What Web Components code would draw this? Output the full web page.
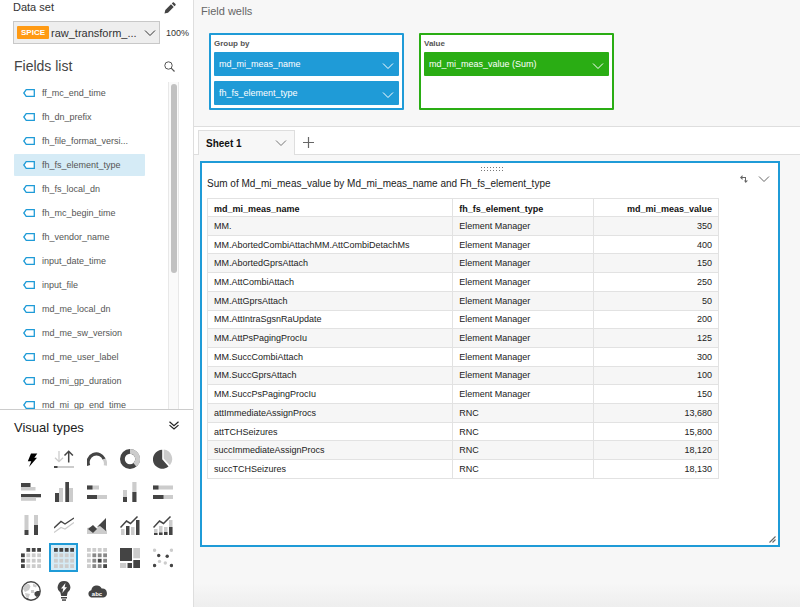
<!DOCTYPE html>
<html lang="en">
<head>
<meta charset="utf-8">
<title>Analysis</title>
<style>
    body {
        margin: 0;
        font-family: "Liberation Sans", Arial, Helvetica, sans-serif;
        font-size: 9px;
        color: #444;
        --blue: #1f9bd7;
        --green: #2aad14;
        --line: #dedede;
        --canvas: #f7f7f7;
    }
</style>
</head>
<body>
<analysis-app></analysis-app>

<script>
// small line icons, used all over the page
const GLYPHS = {
    chevron: ['0 0 12 8', '<path d="M1 1.500l5 5 5-5" fill="none" stroke="currentColor" stroke-width="1"/>'],
    double: ['0 0 10 9', '<path d="M.5 .8l4.500 3.800L9.500 .8M.5 4.100L5 7.900l4.500-3.800" fill="none" stroke="currentColor" stroke-width="1.200"/>'],
    pencil: ['0 0 12 12', '<path d="M.5 11.500l.8-3.500L7 2.300l2.700 2.700L4 10.700zM7.800 1.500l1-1c.3-.3.8-.3 1.100 0l1.600 1.600c.3.3.3.8 0 1.100l-1 1z" fill="currentColor"/>'],
    search: ['0 0 11 11', '<circle cx="4.500" cy="4.500" r="3.700" fill="none" stroke="currentColor"/><path d="M7.200 7.200l3.300 3.300" stroke="currentColor" stroke-width="1.200"/>'],
    tag: ['0 0 12 8', '<path d="M3.200 .7h8.100v6.600H3.200L.8 4z" fill="#fff" stroke="currentColor" stroke-width="1.300"/>'],
    plus: ['0 0 11 11', '<path d="M5.500 0v11M0 5.500h11" stroke="currentColor" stroke-width="1.200"/>'],
    swap: ['0 0 8 8', '<path d="M0 2.500L2.500 0v2H6v3.500h2L5.700 8 4 5.500h1V3H2.500v2z" fill="currentColor"/>'],
    grip: ['0 0 7 7', '<path d="M.5 6.500l6-6M3.500 6.500l3-3" stroke="currentColor" stroke-width="1.100"/>']
};

const D = '#444';
const L = '#ccc';
const rect = (x, y, w, h, fill) => `<rect x="${x}" y="${y}" width="${w}" height="${h}" fill="${fill}"/>`;
const dot = (x, y, fill) => `<circle cx="${x}" cy="${y}" r="1.700" fill="${fill}"/>`;

// 4x4 matrix of squares, one colour letter for each cell
function matrix(rows) {
    const colours = {d: '#444', m: '#888', l: '#ccc', n: 'none'};
    return rows.map((row, y) => [...row].map((c, x) =>
        rect(x * 5.4, y * 5.4, 3.8, 3.8, colours[c])).join('')).join('');
}

// name and drawing of each visual type, on a 20x20 box
const VISUALS = [
    ['AutoGraph', '<path d="M10 4.500h6.300l-3 4.200h2.700L8 18l2.300-5.700H6.800z" fill="#000"/>'],
    ['KPI', `<path d="M5 2v10.500M1 8.700l4 4 4-4" fill="none" stroke="${L}" stroke-width="1.300"/>
        <path d="M14.700 13.500V2.500M10.500 6.500l4.200-4.200 4.200 4.200" fill="none" stroke="${D}" stroke-width="1.500"/>
        ${rect(0, 17, 20, 2, L)}${rect(0, 17, 3.5, 2, D)}`],
    ['Gauge', `<path d="M1.700 16.500a8.300 8.300 0 0 1 15.500-6.300" fill="none" stroke="${D}" stroke-width="3.200"/>
        <path d="M17.200 10.200a8.300 8.300 0 0 1 1.100 6.300" fill="none" stroke="${L}" stroke-width="3.200"/>`],
    ['Donut chart', `<circle cx="10" cy="10" r="7.600" fill="none" stroke="${D}" stroke-width="4.800"/>
        <path d="M10 2.400a7.600 7.600 0 0 1 4.900 13.400" fill="none" stroke="${L}" stroke-width="4.800"/>`],
    ['Pie chart', `<path d="M9.200 .8v9.500l6.300 7.300A9.500 9.500 0 1 1 9.200 .8z" fill="${D}"/>
        <path d="M10.700 .6a9.500 9.500 0 0 1 6.200 15.600l-6.200-6.800z" fill="${L}"/>`],
    ['Horizontal bar chart', rect(0, 1, 9.5, 4, D) + rect(0, 5, 14.5, 3.5, L) + rect(0, 12, 20, 3.3, D) + rect(0, 15.3, 15, 3.5, L)],
    ['Vertical bar chart', rect(1, 11, 4, 9, D) + rect(5, 6, 4, 14, L) + rect(11.3, 0, 3.7, 20, D) + rect(15, 6, 4, 14, L)],
    ['Stacked horizontal bar chart', rect(0, 3.5, 12, 4, L) + rect(0, 3.5, 5.5, 4, D) + rect(0, 13, 20, 4, L) + rect(0, 13, 10, 4, D)],
    ['Stacked vertical bar chart', rect(3, 8, 4, 7, L) + rect(3, 15, 4, 5, D) + rect(12.3, 0, 4.2, 10, L) + rect(12.3, 10, 4.2, 10, D)],
    ['Full horizontal bar chart', rect(0, 3.5, 20, 4, L) + rect(0, 3.5, 5.5, 4, D) + rect(0, 13, 20, 4, L) + rect(0, 13, 10.5, 4, D)],
    ['Full vertical bar chart', rect(3.5, 0, 4, 15, L) + rect(3.5, 15, 4, 5, D) + rect(13, 0, 4, 10, L) + rect(13, 10, 4, 10, D)],
    ['Line chart', `<path d="M0 17.500l7-5 4 1.500 9-6.500" fill="none" stroke="${L}" stroke-width="1.300"/>
        <path d="M0 13l7-6.500 4 2.500 9-6" fill="none" stroke="${D}" stroke-width="1.400"/>`],
    ['Area chart', `<path d="M0 19v-6l4-1 6 1 3-4 7 6v4z" fill="${L}"/><path d="M1 14l5-4 4 4-4 4zM10 12l9-9v13l-6-5z" fill="${D}"/>`],
    ['Bar and line chart', rect(1, 14, 3.5, 6, L) + rect(6, 11, 3.5, 9, D) + rect(11, 12, 3.5, 8, L) + rect(16, 5, 3.5, 15, D) +
        `<path d="M.5 12.500l6-6.500 4 2.500 7-7" fill="none" stroke="${D}" stroke-width="1.500"/>`],
    ['Stacked bar and line chart', rect(1, 14, 3.5, 6, L) + rect(6, 11, 3.5, 9, L) + rect(11, 12, 3.5, 8, L) + rect(16, 5, 3.5, 15, L) +
        rect(1, 18, 3.5, 2, D) + rect(6, 17.5, 3.5, 2.5, D) + rect(11, 17, 3.5, 3, D) + rect(16, 12, 3.5, 8, D) +
        `<path d="M.5 12.500l6-6.500 4 2.500 7-7" fill="none" stroke="${D}" stroke-width="1.500"/>`],
    ['Pivot table', matrix(['nddd', 'dlll', 'dlll', 'dlll'])],
    ['Table', matrix(['dddd', 'llll', 'llll', 'llll'])],
    ['Heat map', matrix(['llll', 'lmmm', 'lmdm', 'lmmd'])],
    ['Tree map', rect(0, 0, 12, 13, D) + rect(13.3, 0, 6.7, 10.3, L) + rect(0, 15, 6.3, 5, L) + rect(7.5, 15, 4.5, 5, D) + rect(13.3, 12, 6.7, 8, D)],
    ['Scatter plot', dot(1.6, 2.3, L) + dot(18.4, 2.3, L) + dot(6.5, 13.4, L) + dot(12.3, 15, L) +
        dot(5.7, 7.5, D) + dot(14.2, 8.3, D) + dot(1.6, 17.5, D) + dot(18.4, 17.5, D)],
    ['Map', `<circle cx="10" cy="10" r="9.200" fill="#fff" stroke="${D}" stroke-width="1.400"/>
        <path d="M2 8c0-3 3-5.500 6-5l1.500 2.500L8 9l-4 2zM4 12l5 1-1.500 4-2.500-1zM12 2.500l4 2-1 2-3-1zM10 9h3v3h-3z" fill="${L}"/>
        <path d="M13.500 11.500l2.500-1.500h3l-1 4.500-2.500 1.500-2-2zM5.500 16.500l4 2.200-3-.2z" fill="${D}"/>`],
    ['Insight', `<path d="M10 0a6.300 6.300 0 0 1 3.600 11.500L12.800 15H7.200l-.8-3.500A6.300 6.300 0 0 1 10 0z" fill="${D}"/>
        ${rect(7, 16, 6, 1.5, D)}${rect(8, 18.3, 4, 1.5, D)}
        <path d="M11.500 2L7 7.500h2.300L8.300 12 13 6.200h-2.400z" fill="#fff"/>`],
    ['Word cloud', `<path d="M4 16.500a3.800 3.800 0 0 1 .3-7.300A5.500 5.500 0 0 1 14.700 7.500a4.600 4.600 0 0 1 1.800 9z" fill="${D}"/>
        <text x="10" y="14.500" text-anchor="middle" font-size="6" font-weight="bold" fill="#fff">abc</text>`]
];

class GlyphIcon extends HTMLElement {
    constructor() {
        super();
        this.attachShadow({mode: 'open'});
    }

    connectedCallback() {
        const [box, drawing] = GLYPHS[this.getAttribute('name')];
        const [, , w, h] = box.split(' ');
        this.shadowRoot.innerHTML = `
            <style>
                :host { display: inline-flex; flex: none; }
                svg { display: block; }
            </style>
            <svg viewBox="${box}" width="${w}" height="${h}" aria-hidden="true">${drawing}</svg>
        `;
    }
}

// <data-set-picker tag="SPICE" value="my_data" loaded="100%">
class DataSetPicker extends HTMLElement {
    constructor() {
        super();
        this.attachShadow({mode: 'open'});
    }

    connectedCallback() {
        this.shadowRoot.innerHTML = `
            <style>
                :host { display: block; padding: 0 4px 0 13px; color: #333; }
                .top { display: flex; justify-content: space-between; align-items: center; height: 15px; padding-right: 13px; margin-bottom: 6px; }
                label { font-size: 11px; line-height: 15px; }
                button { border: 0; background: none; padding: 0; display: flex; color: #444; }
                .row { display: flex; align-items: center; gap: 6px; }
                .box { flex: 1; min-width: 0; box-sizing: border-box; height: 23px; display: grid; grid-template-columns: auto 1fr 12px; align-items: center; padding: 0 3px; background: #eee; border: 1px solid #c8c8c8; }
                .badge { background: #ff9a13; color: #fff; font-weight: bold; font-size: 8px; line-height: 13px; padding: 0 4px; border-radius: 1px; }
                select { grid-column: 2 / 4; grid-row: 1; appearance: none; border: 0; background: none; margin: 0; padding: 0 0 0 2px; font: inherit; font-size: 11px; color: inherit; min-width: 0; width: 100%; }
                glyph-icon { grid-column: 3; grid-row: 1; pointer-events: none; }
            </style>
            <div class="top">
                <label for="set">Data set</label>
                <button aria-label="Edit data set"><glyph-icon name="pencil"></glyph-icon></button>
            </div>
            <div class="row">
                <div class="box">
                    <span class="badge">${this.getAttribute('tag')}</span>
                    <select id="set"><option>${this.getAttribute('value')}</option></select>
                    <glyph-icon name="chevron"></glyph-icon>
                </div>
                <span>${this.getAttribute('loaded')}</span>
            </div>
        `;
    }
}

class FieldItem extends HTMLElement {
    constructor() {
        super();
        this.attachShadow({mode: 'open'});
        this.shadowRoot.innerHTML = `
            <style>
                :host { display: block; flex: none; }
                button { display: flex; align-items: center; gap: 7px; width: 100%; height: 22px; padding: 0 0 0 9px; border: 0; border-radius: 1px; background: none; font: inherit; color: #555; white-space: nowrap; }
                :host([selected]) button { background: #d5ebf6; }
                glyph-icon { color: var(--blue); }
            </style>
            <button><glyph-icon name="tag"></glyph-icon><slot></slot></button>
        `;
    }
}

class FieldsList extends HTMLElement {
    constructor() {
        super();
        this.attachShadow({mode: 'open'});
        this.shadowRoot.innerHTML = `
            <style>
                :host { display: flex; flex-direction: column; min-height: 0; }
                header { display: flex; align-items: center; justify-content: space-between; padding: 6px 18px 0 14px; height: 32px; flex: none; }
                h2 { margin: 0; font-size: 14px; font-weight: normal; }
                header button { border: 0; background: none; padding: 0; display: flex; color: #555; }
                .body { flex: 1; min-height: 0; display: flex; justify-content: space-between; overflow: hidden; padding: 0 14px; }
                .items { width: 131px; display: flex; flex-direction: column; gap: 2px; }
                .track { width: 9px; background: #fafafa; border: solid #e8e8e8; border-width: 0 1px; padding-top: 2px; }
                .thumb { width: 6px; margin: 0 auto; height: 58%; border-radius: 3px; background: #c1c1c1; }
            </style>
            <header>
                <h2>Fields list</h2>
                <button aria-label="Search fields"><glyph-icon name="search"></glyph-icon></button>
            </header>
            <div class="body">
                <div class="items"><slot></slot></div>
                <div class="track"><div class="thumb"></div></div>
            </div>
        `;
    }
}

class VisualTypes extends HTMLElement {
    constructor() {
        super();
        this.attachShadow({mode: 'open'});
    }

    connectedCallback() {
        const selected = this.getAttribute('selected');
        const buttons = VISUALS.map(([name, drawing]) => `
            <button aria-label="${name}" aria-pressed="${name === selected}">
                <svg viewBox="0 0 20 20" width="20" height="20">${drawing}</svg>
            </button>`).join('');
        this.shadowRoot.innerHTML = `
            <style>
                :host { display: block; flex: none; border-top: 1px solid #ccc; background: #fff; padding-bottom: 2px; }
                header { display: flex; align-items: center; justify-content: space-between; height: 34px; padding: 0 14px; color: #222; }
                h2 { margin: 0; font-size: 13px; font-weight: normal; }
                header button { border: 0; background: none; padding: 0 0 3px; display: flex; color: inherit; }
                .grid { display: grid; grid-template-columns: repeat(5, 29px); gap: 4px; padding-left: 16px; }
                .grid button { box-sizing: border-box; height: 29px; padding: 0; border: 2px solid transparent; background: none; display: grid; place-items: center; }
                .grid button[aria-pressed="true"] { border-color: var(--blue); background: #d5ebf6; }
                svg { display: block; }
            </style>
            <header>
                <h2>Visual types</h2>
                <button aria-label="Collapse"><glyph-icon name="double"></glyph-icon></button>
            </header>
            <div class="grid">${buttons}</div>
        `;
    }
}

class FieldPill extends HTMLElement {
    constructor() {
        super();
        this.attachShadow({mode: 'open'});
        this.shadowRoot.innerHTML = `
            <style>
                :host { display: block; }
                button { display: flex; align-items: center; justify-content: space-between; width: 100%; height: 24px; padding: 0 5px; border: 0; border-radius: 1px; background: var(--well); color: #fff; font: inherit; }
                glyph-icon { padding-top: 3px; }
            </style>
            <button><slot></slot><glyph-icon name="chevron"></glyph-icon></button>
        `;
    }
}

// <field-well label="Group by"> with <field-pill> children
class FieldWell extends HTMLElement {
    constructor() {
        super();
        this.attachShadow({mode: 'open'});
    }

    connectedCallback() {
        this.shadowRoot.innerHTML = `
            <style>
                :host { --well: var(--blue); display: block; box-sizing: border-box; flex: 0 1 195px; border: 2px solid var(--well); border-radius: 1px; background: #fff; padding: 0 3px 3px; }
                :host([measure]) { --well: var(--green); }
                h3 { margin: 0; font-size: 8px; line-height: 17px; color: #555; }
                .pills { display: flex; flex-direction: column; gap: 5px; }
            </style>
            <h3>${this.getAttribute('label')}</h3>
            <div class="pills"><slot></slot></div>
        `;
    }
}

class SheetTabs extends HTMLElement {
    constructor() {
        super();
        this.attachShadow({mode: 'open'});
        this.shadowRoot.innerHTML = `
            <style>
                :host { display: flex; background: #fff; border-top: 1px solid var(--line); padding-top: 3px; height: 25px; }
                .edge { width: 4px; border-bottom: 1px solid var(--line); }
                .tab { width: 97px; box-sizing: border-box; display: flex; align-items: center; justify-content: space-between; padding: 0 7px; border: 1px solid var(--line); border-bottom: 0; background: var(--canvas); font: bold 10px "Liberation Sans", Arial, sans-serif; color: #111; }
                .tab glyph-icon { color: #777; }
                .rest { flex: 1; display: flex; align-items: center; padding-left: 8px; border-bottom: 1px solid var(--line); }
                .rest button { border: 0; padding: 0; background: none; color: #666; display: flex; }
            </style>
            <div class="edge"></div>
            <button class="tab"><slot></slot><glyph-icon name="chevron"></glyph-icon></button>
            <div class="rest"><button aria-label="Add sheet"><glyph-icon name="plus"></glyph-icon></button></div>
        `;
    }
}

class DataTable extends HTMLElement {
    constructor() {
        super();
        this.attachShadow({mode: 'open'});
    }

    connectedCallback() {
        const rows = [
            ['MM.', 'Element Manager', '350'],
            ['MM.AbortedCombiAttachMM.AttCombiDetachMs', 'Element Manager', '400'],
            ['MM.AbortedGprsAttach', 'Element Manager', '150'],
            ['MM.AttCombiAttach', 'Element Manager', '250'],
            ['MM.AttGprsAttach', 'Element Manager', '50'],
            ['MM.AttIntraSgsnRaUpdate', 'Element Manager', '200'],
            ['MM.AttPsPagingProcIu', 'Element Manager', '125'],
            ['MM.SuccCombiAttach', 'Element Manager', '300'],
            ['MM.SuccGprsAttach', 'Element Manager', '100'],
            ['MM.SuccPsPagingProcIu', 'Element Manager', '150'],
            ['attImmediateAssignProcs', 'RNC', '13,680'],
            ['attTCHSeizures', 'RNC', '15,800'],
            ['succImmediateAssignProcs', 'RNC', '18,120'],
            ['succTCHSeizures', 'RNC', '18,130']
        ];
        const cells = rows.map(row => `<tr>${row.map(c => `<td>${c}</td>`).join('')}</tr>`).join('');
        this.shadowRoot.innerHTML = `
            <style>
                :host { display: block; }
                table { width: 90%; height: 281px; table-layout: fixed; border-collapse: collapse; color: #222; border: 1px solid #e2e2e2; }
                th, td { box-sizing: border-box; padding: 2px 6px; text-align: left; border: 1px solid #e2e2e2; line-height: 12px; }
                th { color: #111; padding: 4px 6px 1px; }
                th:nth-child(1) { width: 48%; }
                th:nth-child(2) { width: 27.5%; }
                :is(th, td):nth-child(3) { text-align: right; }
                tbody tr:nth-child(odd) { background: #f6f6f6; }
            </style>
            <table>
                <thead><tr><th>md_mi_meas_name</th><th>fh_fs_element_type</th><th>md_mi_meas_value</th></tr></thead>
                <tbody>${cells}</tbody>
            </table>
        `;
    }
}

class VisualCard extends HTMLElement {
    constructor() {
        super();
        this.attachShadow({mode: 'open'});
        this.shadowRoot.innerHTML = `
            <style>
                :host { display: flex; flex-direction: column; box-sizing: border-box; border: 2px solid var(--blue); background: #fff; padding: 3px 2px 2px 5px; }
                .handle { align-self: center; width: 24px; height: 6px; background: radial-gradient(circle, #777 1px, transparent 1px) 0 0 / 3px 3px; }
                header { display: flex; justify-content: space-between; height: 24px; padding: 2px 6px 0 0; }
                h1 { margin: 0; font-size: 10px; font-weight: normal; line-height: 20px; color: #222; }
                .tools { display: flex; align-items: center; gap: 10px; height: 10px; color: #666; }
                .tools button { border: 0; padding: 0; background: none; color: inherit; display: flex; }
                .grow { flex: 1; }
                .grip { align-self: flex-end; color: #666; }
            </style>
            <div class="handle"></div>
            <header>
                <h1><slot name="title"></slot></h1>
                <div class="tools">
                    <button aria-label="Swap axes"><glyph-icon name="swap"></glyph-icon></button>
                    <button aria-label="Visual menu"><glyph-icon name="chevron"></glyph-icon></button>
                </div>
            </header>
            <slot></slot>
            <div class="grow"></div>
            <glyph-icon class="grip" name="grip"></glyph-icon>
        `;
    }
}

const app = document.createElement('template');
app.innerHTML = `
    <style>
        :host { display: flex; height: 100vh; }
        aside { flex: 0 0 193px; display: flex; flex-direction: column; border-right: 1px solid var(--line); background: #fff; }
        fields-list { flex: 1; }
        main { flex: 1; min-width: 0; display: flex; flex-direction: column; background: linear-gradient(to top, #eee, var(--canvas) 24px); }
        h2 { margin: 0; padding: 0 7px; font-size: 11px; font-weight: normal; line-height: 22px; color: #666; }
        .wells { display: flex; gap: 15px; padding: 11px 15px 16px; }
        visual-card { flex: 1; margin: 6px 20px 60px 6px; }
    </style>
    <aside>
        <data-set-picker tag="SPICE" value="raw_transform_..." loaded="100%"></data-set-picker>
        <fields-list>
            <field-item>ff_mc_end_time</field-item>
            <field-item>fh_dn_prefix</field-item>
            <field-item>fh_file_format_versi...</field-item>
            <field-item selected>fh_fs_element_type</field-item>
            <field-item>fh_fs_local_dn</field-item>
            <field-item>fh_mc_begin_time</field-item>
            <field-item>fh_vendor_name</field-item>
            <field-item>input_date_time</field-item>
            <field-item>input_file</field-item>
            <field-item>md_me_local_dn</field-item>
            <field-item>md_me_sw_version</field-item>
            <field-item>md_me_user_label</field-item>
            <field-item>md_mi_gp_duration</field-item>
            <field-item>md_mi_gp_end_time</field-item>
        </fields-list>
        <visual-types selected="Table"></visual-types>
    </aside>
    <main>
        <h2>Field wells</h2>
        <div class="wells">
            <field-well label="Group by">
                <field-pill>md_mi_meas_name</field-pill>
                <field-pill>fh_fs_element_type</field-pill>
            </field-well>
            <field-well label="Value" measure>
                <field-pill>md_mi_meas_value (Sum)</field-pill>
            </field-well>
        </div>
        <sheet-tabs>Sheet 1</sheet-tabs>
        <visual-card>
            <span slot="title">Sum of Md_mi_meas_value by Md_mi_meas_name and Fh_fs_element_type</span>
            <data-table></data-table>
        </visual-card>
    </main>
`;

class AnalysisApp extends HTMLElement {
    constructor() {
        super();
        this.attachShadow({mode: 'open'});
        this.shadowRoot.appendChild(app.content.cloneNode(true));
    }
}

window.customElements.define('glyph-icon', GlyphIcon);
window.customElements.define('data-set-picker', DataSetPicker);
window.customElements.define('field-item', FieldItem);
window.customElements.define('fields-list', FieldsList);
window.customElements.define('visual-types', VisualTypes);
window.customElements.define('field-pill', FieldPill);
window.customElements.define('field-well', FieldWell);
window.customElements.define('sheet-tabs', SheetTabs);
window.customElements.define('data-table', DataTable);
window.customElements.define('visual-card', VisualCard);
window.customElements.define('analysis-app', AnalysisApp);
</script>
</body>
</html>
